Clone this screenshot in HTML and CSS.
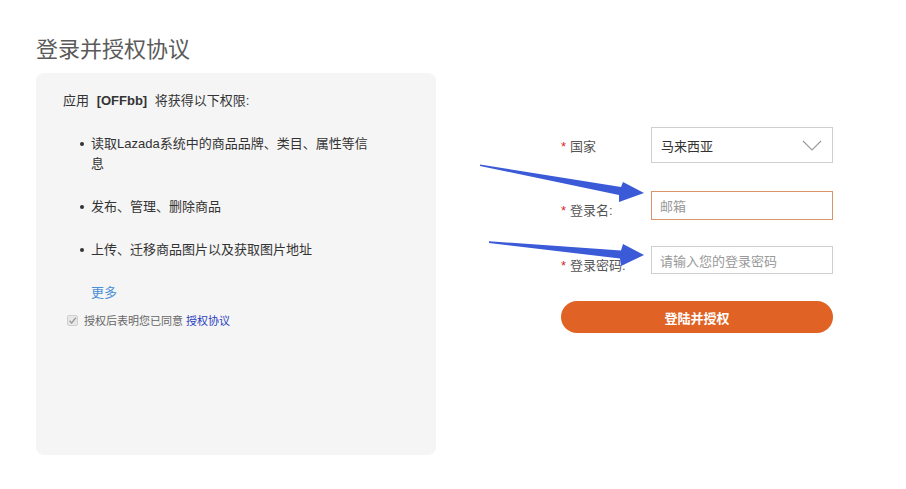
FILE: index.html
```html
<!DOCTYPE html>
<html lang="zh-CN">
<head>
<meta charset="utf-8">
<title>登录并授权协议</title>
<link rel="stylesheet" href="styles.css">
</head>
<body>
<div class="page">
  <h1 class="title">登录并授权协议</h1>
  <div class="main">
    <section class="panel">
      <p class="intro">应用 <b class="app">[OFFbb]</b> 将获得以下权限:</p>
      <ul class="perms">
        <li>读取Lazada系统中的商品品牌、类目、属性等信息</li>
        <li>发布、管理、删除商品</li>
        <li>上传、迁移商品图片以及获取图片地址</li>
      </ul>
      <a class="more">更多</a>
      <label class="agree">
        <span class="check"><svg width="9" height="9" viewBox="0 0 9 9"><path d="M1.5 4.8 L3.6 6.9 L7.8 1.8" fill="none" stroke="#9a9a9a" stroke-width="1.4"/></svg></span>
        <span>授权后表明您已同意 <a class="link">授权协议</a></span>
      </label>
    </section>
    <form class="form">
      <div class="row">
        <span class="label"><i class="star">*</i>国家</span>
        <div class="select">
          <span>马来西亚</span>
          <svg class="chev" width="20" height="11" viewBox="0 0 20 11"><path d="M1 1 L10 10 L19 1" fill="none" stroke="#999" stroke-width="1.1"/></svg>
        </div>
      </div>
      <div class="row row-input">
        <span class="label low"><i class="star">*</i>登录名:</span>
        <div class="input focus"><span class="ph">邮箱</span></div>
      </div>
      <div class="row row-input">
        <span class="label low"><i class="star">*</i>登录密码:</span>
        <div class="input"><span class="ph">请输入您的登录密码</span></div>
      </div>
      <button type="button" class="submit">登陆并授权</button>
    </form>
  </div>
  <svg class="arrows" width="906" height="489" viewBox="0 0 906 489">
    <polygon points="480,164.5 621,187 623,182 644,193 619,202 619,195 480,166" fill="#3a5ad8"/>
    <polygon points="489,241.3 621,250.5 623,244 644,255 621,266 620,258.5 489,243" fill="#3a5ad8"/>
  </svg>
</div>
</body>
</html>
```

FILE: styles.css
```css
* { box-sizing: border-box; }
html, body { margin: 0; padding: 0; background: #fff; }
body {
  font-family: "Liberation Sans", "Noto Sans CJK SC", sans-serif;
  font-size: 13px;
  color: #333;
}
.page {
  position: relative;
  width: 906px;
  height: 489px;
  padding: 36px 0 0 36px;
}
.title {
  margin: 0;
  font-size: 22px;
  line-height: 28px;
  font-weight: normal;
  color: #5a5a5a;
}
.main {
  display: flex;
  margin-top: 9px;
}
.panel {
  width: 400px;
  height: 382px;
  background: #f5f5f5;
  border-radius: 8px;
  padding: 18px 0 0 27px;
}
.intro {
  margin: 0;
  line-height: 20px;
  color: #333;
}
.app { font-weight: bold; margin: 0 4px; }
.perms {
  list-style: none;
  margin: 23px 0 0 0;
  padding: 0;
  width: 310px;
}
.perms li {
  position: relative;
  padding-left: 28px;
  line-height: 19.5px;
  margin-bottom: 23.5px;
  word-break: break-all;
}
.perms li::before {
  content: "";
  position: absolute;
  left: 17px;
  top: 8px;
  width: 4px;
  height: 4px;
  border-radius: 50%;
  background: #333;
}
.more {
  display: block;
  margin-left: 28px;
  margin-top: 0;
  line-height: 20px;
  color: #4a8fd8;
}
.agree {
  display: flex;
  align-items: center;
  gap: 6px;
  margin: 9px 0 0 4px;
  font-size: 11px;
  line-height: 18px;
  color: #666;
}
.check {
  width: 11px;
  height: 11px;
  border: 1px solid #cfcfcf;
  border-radius: 2px;
  background: #e8e8e8;
  display: flex;
  align-items: center;
  justify-content: center;
}
.check svg { display: block; }
.link { color: #2b3fc0; }
.form {
  margin-left: 125px;
  width: 272px;
  padding-top: 54px;
}
.row {
  display: flex;
  align-items: center;
}
.row-input { margin-top: 28px; }
.row-input + .row-input { margin-top: 26px; }
.label {
  width: 90px;
  padding-left: 0;
  color: #555;
}
.label.low { margin-top: 8px; }
.star {
  font-style: normal;
  color: #d8262c;
  margin-right: 4px;
}
.select {
  width: 182px;
  height: 36px;
  border: 1px solid #cfcfcf;
  background: #fff;
  display: flex;
  align-items: center;
  justify-content: space-between;
  padding: 0 10px 0 9px;
  color: #333;
}
.chev { display: block; }
.input {
  width: 182px;
  height: 28px;
  border: 1px solid #cfcfcf;
  background: #fff;
  display: flex;
  align-items: center;
  padding-left: 8px;
}
.input.focus {
  height: 29px;
  border-color: #d9956a;
}
.ph { color: #999; }
.submit {
  display: block;
  margin-top: 27px;
  width: 272px;
  height: 32px;
  border: none;
  border-radius: 16px;
  background: #e06224;
  color: #fff;
  font-family: "Liberation Sans", "Noto Sans CJK SC", sans-serif;
  font-size: 13px;
  font-weight: bold;
}
.arrows {
  position: absolute;
  left: 0;
  top: 0;
  pointer-events: none;
}
```
